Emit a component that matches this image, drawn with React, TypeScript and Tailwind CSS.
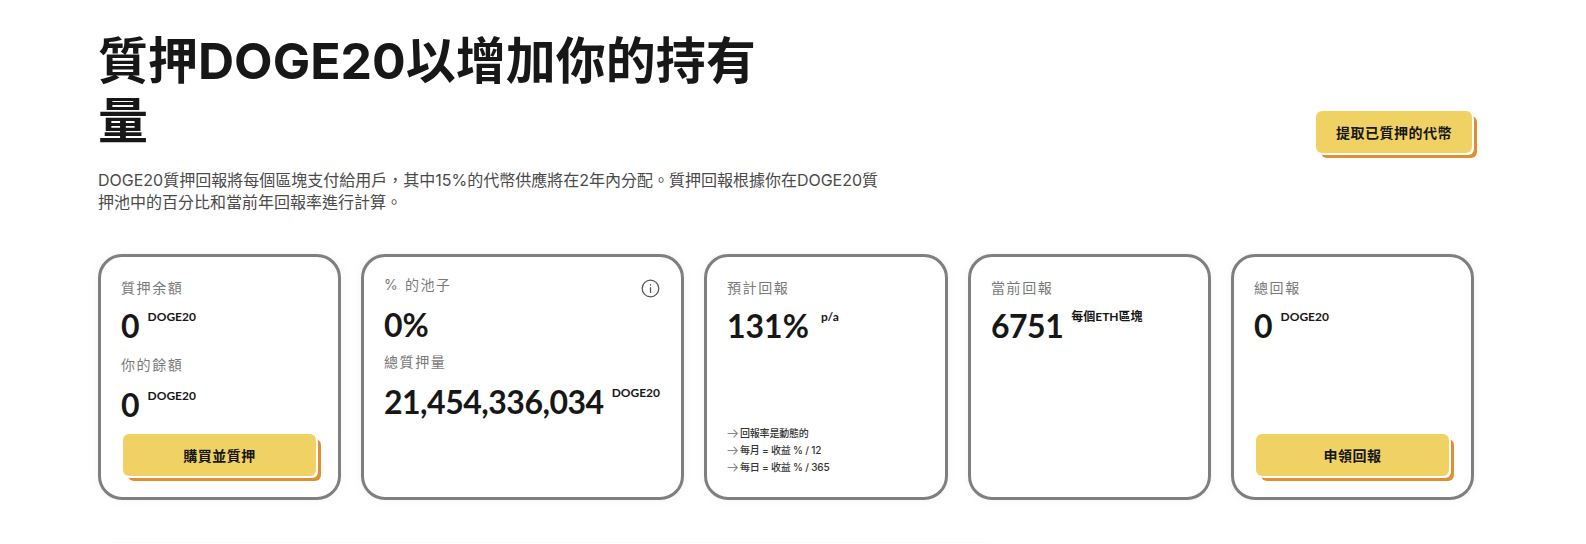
import { ReactNode } from "react";

const font = "font-['Inter','Noto_Sans_CJK_TC',sans-serif]";
const numberFont = "font-['Lato','Noto_Sans_CJK_TC',sans-serif]";

function Label({ children }: { children: ReactNode }) {
    return <div className="text-[14px] leading-[20px] tracking-[1.6px] text-[#7a7a7a]">{children}</div>;
}

function Amount({ value, unit, unitClass = "ml-2", numberClass = "" }: { value: string; unit: string; unitClass?: string; numberClass?: string }) {
    return (
        <div className={`${numberFont} mt-[6px] flex items-start`}>
            <span className={`${numberClass} text-[32px] leading-[44px] font-bold text-[#171717]`}>{value}</span>
            <span className={`${unitClass} mt-[5px] text-[12px] leading-[16px] font-bold text-[#171717]`}>{unit}</span>
        </div>
    );
}

function ActionButton({ children, className }: { children: ReactNode; className: string }) {
    return (
        <button
            className={`${className} h-[42px] rounded-[6px] bg-[#f0d264] text-[14px] font-bold tracking-[0.5px] text-[#171717] shadow-[2px_2px_0_#ffffff,5px_5px_0_#e08f30]`}
        >
            {children}
        </button>
    );
}

function Card({ children }: { children: ReactNode }) {
    return (
        <div className="flex h-[246px] flex-col rounded-[24px] border-[3px] border-[#7f7f7f] bg-white px-[20px] pt-[21px] shadow-[0_0_6px_rgba(230,232,245,0.5)]">
            {children}
        </div>
    );
}

export default function App() {
    return (
        <div className={`${font} h-[544px] w-[1586px] overflow-hidden bg-white pl-[98px] pr-[112px] pt-[31px]`}>
            <div className="flex items-start justify-between">
                <div>
                    <h1 className="w-[680px] text-[50px] leading-[60px] font-bold text-[#171717]">質押DOGE20以增加你的持有量</h1>
                    <p className="mt-[18px] w-[790px] text-[16px] leading-[22px] text-[#4a4a4a]">
                        DOGE20質押回報將每個區塊支付給用戶，其中15%的代幣供應將在2年內分配。質押回報根據你在DOGE20質押池中的百分比和當前年回報率進行計算。
                    </p>
                </div>
                <ActionButton className="mr-[2px] mt-[80px] w-[156px]">提取已質押的代幣</ActionButton>
            </div>

            <div className="mt-[41px] grid grid-cols-[243px_323px_244px_243px_243px] gap-[20px]">
                <Card>
                    <Label>質押余額</Label>
                    <Amount value="0" unit="DOGE20" />
                    <div className="mt-[7px]">
                        <Label>你的餘額</Label>
                    </div>
                    <div className="mt-[2px]">
                        <Amount value="0" unit="DOGE20" />
                    </div>
                    <ActionButton className="mt-[7px] w-[193px] self-center">購買並質押</ActionButton>
                </Card>

                <Card>
                    <div className="-mt-[3px] flex items-start justify-between">
                        <Label>% 的池子</Label>
                        <svg className="mr-[1px] mt-[4px] h-[19px] w-[19px] text-[#555555]" viewBox="0 0 24 24" fill="none" stroke="currentColor" strokeWidth="1.6">
                            <circle cx="12" cy="12" r="10.5" />
                            <path d="M12 11v6M12 7.2v.6" strokeLinecap="round" />
                        </svg>
                    </div>
                    <div className="-mt-[1px]">
                        <Amount value="0%" unit="" />
                    </div>
                    <div className="mt-[5px]">
                        <Label>總質押量</Label>
                    </div>
                    <div className="mt-[2px]">
                        <Amount value="21,454,336,034" unit="DOGE20" numberClass="tracking-[-0.5px]" />
                    </div>
                </Card>

                <Card>
                    <Label>預計回報</Label>
                    <Amount value="131%" unit="p/a" unitClass="ml-3" />
                    <ul className="mb-[21px] mt-auto text-[10px] leading-[17px] font-medium tracking-[-0.2px] text-[#333333]">
                        {["回報率是動態的", "每月 = 收益 % / 12", "每日 = 收益 % / 365"].map((line) => (
                            <li key={line} className="flex items-center gap-[1px]">
                                <svg className="-ml-[1px] h-[13px] w-[13px] text-[#8a8a8a]" viewBox="0 0 24 24" fill="none" stroke="currentColor" strokeWidth="2">
                                    <path d="M3 12h18M14 5l7 7-7 7" />
                                </svg>
                                {line}
                            </li>
                        ))}
                    </ul>
                </Card>

                <Card>
                    <Label>當前回報</Label>
                    <Amount value="6751" unit="每個ETH區塊" numberClass="tracking-[-0.5px]" />
                </Card>

                <Card>
                    <Label>總回報</Label>
                    <Amount value="0" unit="DOGE20" />
                    <ActionButton className="mb-[21px] mt-auto w-[193px] self-center">申領回報</ActionButton>
                </Card>
            </div>

            <div className="ml-[14px] mt-[42px] h-px w-[878px] bg-[#fafafa]" />
        </div>
    );
}
